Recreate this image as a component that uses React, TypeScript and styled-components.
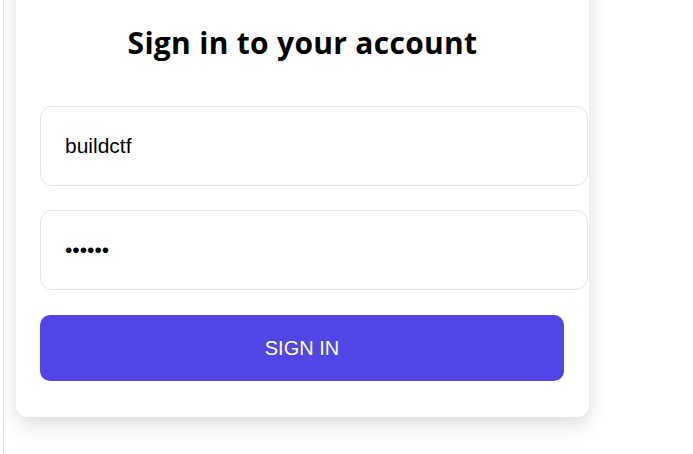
import React from "react";
import styled, { createGlobalStyle } from "styled-components";

const Global = createGlobalStyle`
  html, body { margin: 0; padding: 0; background: #ffffff; }
  body { font-family: "Liberation Sans", Arial, sans-serif; overflow: hidden; }
  * { box-sizing: border-box; }
`;

const Page = styled.div`
  height: 454px;
  margin-left: 3px;
  border-left: 1px solid #e3e3e3;
  padding-left: 12px;
  overflow: hidden;
`;

const Card = styled.div`
  width: 573px;
  margin-top: -30px;
  padding: 55px 24px 36px;
  background: #ffffff;
  border-radius: 12px;
  box-shadow: 0 10px 25px rgba(0, 0, 0, 0.1), 0 4px 10px rgba(0, 0, 0, 0.04);
  display: flex;
  flex-direction: column;
`;

const Title = styled.h2`
  margin: 0 0 45px;
  height: 36px;
  line-height: 36px;
  text-align: center;
  font-family: "Open Sans", sans-serif;
  font-weight: 700;
  font-size: 30px;
  letter-spacing: 0.3px;
  color: #000;
`;

const Field = styled.input<{ $gap: number }>`
  width: 548px;
  height: 80px;
  margin-bottom: ${(p) => p.$gap}px;
  padding: 0 24px;
  border: 1px solid #e4e4e4;
  border-radius: 12px;
  background: #fff;
  font-family: "Liberation Sans", Arial, sans-serif;
  font-size: 21px;
  color: #000;
  outline: none;
`;

const Button = styled.button`
  width: 524px;
  height: 66px;
  border: none;
  border-radius: 10px;
  background: #4f46e5;
  color: #fff;
  font-family: "Liberation Sans", Arial, sans-serif;
  font-size: 20px;
  text-transform: uppercase;
  cursor: pointer;
`;

export default function App() {
  return (
    <>
      <Global />
      <Page>
        <Card>
          <Title>Sign in to your account</Title>
          <Field $gap={24} type="text" defaultValue="buildctf" />
          <Field $gap={25} type="password" defaultValue="123456" />
          <Button>Sign in</Button>
        </Card>
      </Page>
    </>
  );
}
